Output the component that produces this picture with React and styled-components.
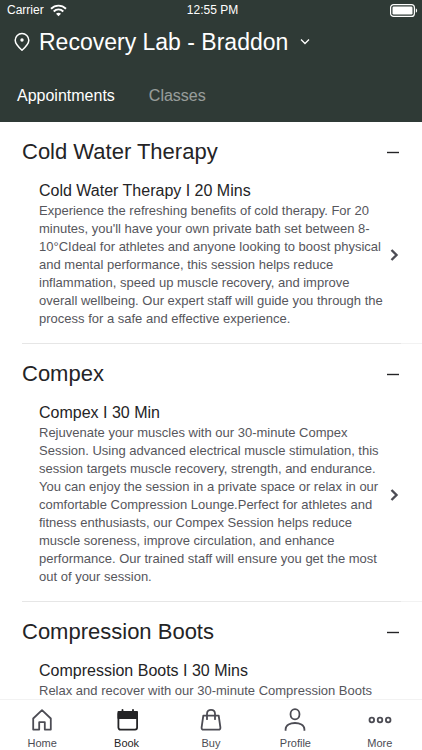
import React, { useState } from 'react';
import styled, { createGlobalStyle } from 'styled-components';

const color_header = '#2f3a36';
const color_text = '#242426';
const color_body = '#56565c';
const color_icon = '#4c4c54';
const color_line = '#e6e6e6';
const color_line_light = '#f2f2f2';

const GlobalStyle = createGlobalStyle`
	*{
		box-sizing: border-box;
		margin: 0;
		padding: 0;
	}

	body{
		font-family: "Liberation Sans", Arial, sans-serif;
		color: ${color_text};
		background-color: #fff;
	}

	button{
		font-family: inherit;
		color: inherit;
		text-align: left;
		background: transparent;
		border: none;
		cursor: pointer;
	}
`;

const Screen = styled.div`
	display: flex;
	flex-direction: column;
	height: 100vh;
`;

const Header = styled.header`
	flex-shrink: 0;
	color: #fff;
	background-color: ${color_header};
`;

const StatusBar = styled.div`
	display: grid;
	grid-template-columns: 1fr auto 1fr;
	align-items: center;
	height: 20px;
	padding: 0 4px 0 7px;
	font-size: 12px;
	line-height: 20px;
`;

const Carrier = styled.div`
	display: flex;
	align-items: center;
	gap: 6px;
`;

const Battery = styled.svg`
	justify-self: end;
`;

const Location = styled.button`
	display: flex;
	align-items: center;
	height: 44px;
	padding: 0 12px;
`;

const LocationName = styled.h1`
	margin: 0 12px 0 7px;
	font-size: 23px;
	font-weight: 400;
	line-height: 28px;
	white-space: nowrap;
`;

const Tabs = styled.div`
	display: flex;
	gap: 34px;
	height: 58px;
	padding: 0 17px;
`;

const Tab = styled.button`
	height: 64px;
	font-size: 16px;
	line-height: 64px;
	opacity: ${props => (props.$active ? 1 : 0.5)};
`;

const List = styled.main`
	flex: 1;
	min-height: 0;
	overflow: hidden;
`;

const Section = styled.section`
	padding-bottom: 15px;
	border-bottom: 1px solid transparent;
	background: linear-gradient(to right, ${color_line} calc(100% - 43px), ${color_line_light} 0) 22px 100% / 100% 1px no-repeat border-box;
`;

const SectionHeader = styled.button`
	display: flex;
	align-items: center;
	justify-content: space-between;
	width: 100%;
	height: 59px;
	padding: 0 22px;
`;

const SectionTitle = styled.h2`
	font-size: 22px;
	font-weight: 400;
	line-height: 28px;
`;

const Item = styled.button`
	display: flex;
	align-items: center;
	justify-content: space-between;
	width: 100%;
	min-height: 147px;
	padding: 0 22px 0 39px;
`;

const ItemText = styled.span`
	display: block;
	align-self: flex-start;
	max-width: 344px;
`;

const ItemTitle = styled.span`
	display: block;
	font-size: 16px;
	line-height: 20px;
`;

const Description = styled.span`
	display: block;
	padding-top: 1px;
	font-size: 13px;
	line-height: 18px;
	color: ${color_body};
`;

const NavBar = styled.nav`
	display: grid;
	grid-template-columns: repeat(5, 1fr);
	flex-shrink: 0;
	height: 51px;
	border-top: 1px solid ${color_line_light};
	background-color: #fff;
`;

const NavItem = styled.button`
	display: flex;
	flex-direction: column;
	align-items: center;
	gap: 4px;
	padding-top: 8px;
	font-size: 11px;
	line-height: 14px;
	color: ${props => (props.$active ? color_text : color_icon)};
`;

const WifiIcon = () => (
	<svg width="17" height="13" viewBox="0 0 17 13" fill="none" stroke="#fff" strokeWidth="1.9">
		<path d="M1 4.7C5.3.6 11.7.6 16 4.7"/>
		<path d="M3.7 7.5c2.8-2.6 6.8-2.6 9.6 0"/>
		<path d="M6 9.7c1.5-1.3 3.5-1.3 5 0L8.5 12.2z" fill="#fff" stroke="none"/>
	</svg>
);

const BatteryIcon = () => (
	<Battery width="28" height="13" viewBox="0 0 28 13">
		<rect x=".6" y=".6" width="23.8" height="11.8" rx="3" fill="none" stroke="#fff" strokeWidth="1.2"/>
		<rect x="2.5" y="2.5" width="20" height="8" rx="1.2" fill="#fff"/>
		<path d="M25.8 4.2c1.8.8 1.8 3.8 0 4.6z" fill="#fff"/>
	</Battery>
);

const PinIcon = () => (
	<svg width="20" height="20" viewBox="0 0 20 20" fill="none" stroke="#fff" strokeWidth="1.5">
		<path d="M10 18.2C6.3 15 3.2 11.7 3.2 8.3a6.8 6.8 0 0 1 13.6 0c0 3.4-3.1 6.7-6.8 9.9z" strokeLinejoin="round"/>
		<circle cx="10" cy="8" r="1.7" fill="#fff" stroke="none"/>
	</svg>
);

const ChevronDown = () => (
	<svg width="10" height="8" viewBox="0 0 10 8" fill="none" stroke="#fff" strokeWidth="1.3">
		<path d="M1 1.5l4 4 4-4"/>
	</svg>
);

const ChevronRight = () => (
	<svg width="12" height="14" viewBox="0 0 12 14" fill="none" stroke={color_icon} strokeWidth="2.4">
		<path d="M3.5 2l5 5-5 5"/>
	</svg>
);

const ToggleIcon = ({open}) => (
	<svg width="14" height="14" viewBox="0 0 14 14" fill="none" stroke={color_text} strokeWidth="1.4">
		<path d={open ? 'M1 7.5h12' : 'M1 7.5h12M7 1.5v12'}/>
	</svg>
);

const NavIcon = ({children}) => (
	<svg width="24" height="24" viewBox="0 0 24 24" fill="none" stroke="currentColor" strokeWidth="1.8" strokeLinejoin="round">
		{children}
	</svg>
);

const HomeIcon = () => (
	<NavIcon>
		<path d="M3.2 10.5L12 2.2l8.8 8.3v11.1h-6v-7.4H9.2v7.4h-6z"/>
	</NavIcon>
);

const BookIcon = () => (
	<NavIcon>
		<path d="M7.5 1.800v3M18 1.800v3" strokeLinecap="round"/>
		<rect x="3.400" y="4" width="18.700" height="17.600" rx="2"/>
		<path d="M3.400 4h18.700v6H3.400z" fill="currentColor"/>
	</NavIcon>
);

const BuyIcon = () => (
	<NavIcon>
		<path d="M4.3 7.7h15.400l1.700 11.800c.2 1.300-.6 2.200-1.900 2.200h-15c-1.300 0-2.100-.9-1.900-2.200z"/>
		<path d="M8 11.200V5.700c0-5.200 8-5.200 8 0v5.500" strokeLinecap="round"/>
	</NavIcon>
);

const ProfileIcon = () => (
	<NavIcon>
		<ellipse cx="12" cy="6.300" rx="4.500" ry="5.100"/>
		<path d="M2.600 22.800v-1.500c0-8.400 18.800-8.400 18.800 0v1.500"/>
	</NavIcon>
);

const MoreIcon = () => (
	<NavIcon>
		<circle cx="3.800" cy="12" r="2.300"/>
		<circle cx="12" cy="12" r="2.300"/>
		<circle cx="20.200" cy="12" r="2.300"/>
	</NavIcon>
);

const sections = [
	{
		title: 'Cold Water Therapy',
		item: 'Cold Water Therapy I 20 Mins',
		text: 'Experience the refreshing benefits of cold therapy. For 20 minutes, you\'ll have your own private bath set between 8-10°CIdeal for athletes and anyone looking to boost physical and mental performance, this session helps reduce inflammation, speed up muscle recovery, and improve overall wellbeing. Our expert staff will guide you through the process for a safe and effective experience.'
	},
	{
		title: 'Compex',
		item: 'Compex I 30 Min',
		text: 'Rejuvenate your muscles with our 30-minute Compex Session. Using advanced electrical muscle stimulation, this session targets muscle recovery, strength, and endurance. You can enjoy the session in a private space or relax in our comfortable Compression Lounge.Perfect for athletes and fitness enthusiasts, our Compex Session helps reduce muscle soreness, improve circulation, and enhance performance. Our trained staff will ensure you get the most out of your session.'
	},
	{
		title: 'Compression Boots',
		item: 'Compression Boots I 30 Mins',
		text: 'Relax and recover with our 30-minute Compression Boots'
	}
];

const navItems = [
	{ name: 'Home', Icon: HomeIcon },
	{ name: 'Book', Icon: BookIcon },
	{ name: 'Buy', Icon: BuyIcon },
	{ name: 'Profile', Icon: ProfileIcon },
	{ name: 'More', Icon: MoreIcon }
];

//------------------------------------------------------------------------------

const ServiceSection = ({title, item, text}) => {
	const [open, setOpen] = useState(true);

	return(
		<Section>
			<SectionHeader aria-expanded={open} onClick={() => setOpen(!open)}>
				<SectionTitle>{title}</SectionTitle>
				<ToggleIcon open={open}/>
			</SectionHeader>
			{open && (
				<Item>
					<ItemText>
						<ItemTitle>{item}</ItemTitle>
						<Description>{text}</Description>
					</ItemText>
					<ChevronRight/>
				</Item>
			)}
		</Section>
	)
}

const App = () => {
	const [tab, setTab] = useState('Appointments');
	const [page, setPage] = useState('Book');

	return(
		<Screen>
			<GlobalStyle/>
			<Header>
				<StatusBar>
					<Carrier>Carrier <WifiIcon/></Carrier>
					<span>12:55 PM</span>
					<BatteryIcon/>
				</StatusBar>
				<Location>
					<PinIcon/>
					<LocationName>Recovery Lab - Braddon</LocationName>
					<ChevronDown/>
				</Location>
				<Tabs>
					{['Appointments', 'Classes'].map(name => (
						<Tab key={name} $active={name === tab} onClick={() => setTab(name)}>{name}</Tab>
					))}
				</Tabs>
			</Header>
			<List>
				{sections.map(section => <ServiceSection key={section.title} {...section}/>)}
			</List>
			<NavBar>
				{navItems.map(({name, Icon}) => (
					<NavItem key={name} $active={name === page} onClick={() => setPage(name)}>
						<Icon/>
						{name}
					</NavItem>
				))}
			</NavBar>
		</Screen>
	)
}

export default App;
